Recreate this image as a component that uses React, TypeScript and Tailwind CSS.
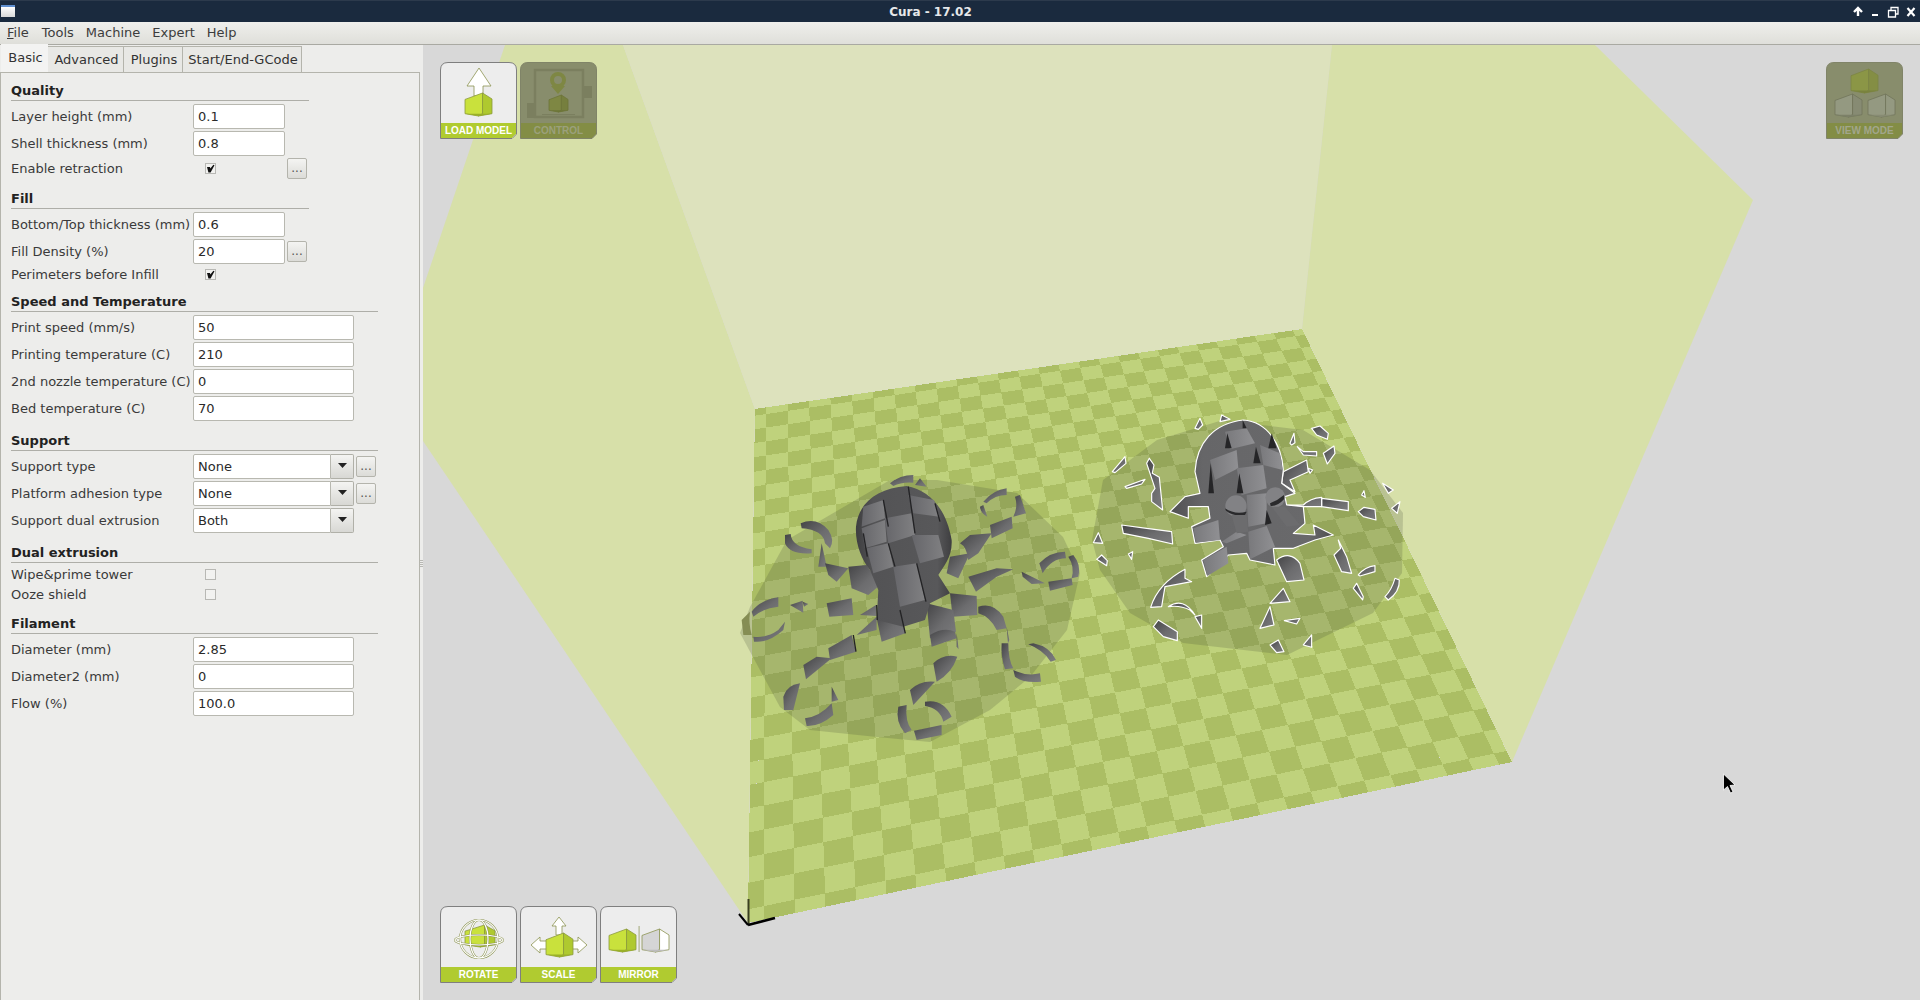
import React from "react";

const FONT = "font-['DejaVu_Sans',sans-serif]";

// Bed corners on the page: back left, back right, front right, front left
const BED = [
  [748, 923],
  [1512, 762],
  [1302, 329],
  [755, 409],
];
const CELLS_U = 27;
const CELLS_V = 27;

function makeProjector(q: number[][]) {
  const [[x0, y0], [x1, y1], [x2, y2], [x3, y3]] = q;
  const dx1 = x1 - x2;
  const dx2 = x3 - x2;
  const sx = x0 - x1 + x2 - x3;
  const dy1 = y1 - y2;
  const dy2 = y3 - y2;
  const sy = y0 - y1 + y2 - y3;
  const den = dx1 * dy2 - dx2 * dy1;
  const g = (sx * dy2 - dx2 * sy) / den;
  const h = (dx1 * sy - sx * dy1) / den;
  const a = x1 - x0 + g * x1;
  const b = x3 - x0 + h * x3;
  const d = y1 - y0 + g * y1;
  const e = y3 - y0 + h * y3;
  return (u: number, v: number) => {
    const w = g * u + h * v + 1;
    return `${((a * u + b * v + x0) / w).toFixed(1)},${((d * u + e * v + y0) / w).toFixed(1)}`;
  };
}

function bedCells() {
  const project = makeProjector(BED);
  const stops = (n: number) => {
    const list = [0];
    for (let i = 0; i < n; i++) list.push((i + 0.5) / n);
    list.push(1);
    return list;
  };
  const us = stops(CELLS_U);
  const vs = stops(CELLS_V);
  const light: string[] = [];
  const dark: string[] = [];
  for (let i = 0; i < us.length - 1; i++) {
    for (let j = 0; j < vs.length - 1; j++) {
      const pts = [
        project(us[i], vs[j]),
        project(us[i + 1], vs[j]),
        project(us[i + 1], vs[j + 1]),
        project(us[i], vs[j + 1]),
      ].join(" ");
      if ((i + j) % 2 === 0) light.push(pts);
      else dark.push(pts);
    }
  }
  return { light, dark };
}

// Left model, in a 3x space that starts at (730,460)
const LEFT_PARTS = [
  "M480,70 Q510,45 550,45 L550,68 Q515,65 490,78Z",
  "M555,75 L570,55 L590,80Z",
  "M760,125 Q790,90 830,85 L830,105 Q795,105 770,130Z",
  "M750,140 L760,135 L772,170 Q752,160 750,140Z",
  "M855,110 L870,105 L888,160 L850,170 Q865,140 855,110Z",
  "M780,195 L845,170 L848,205 L785,235Z",
  "M690,250 L720,225 L785,220 L745,280 L715,300 Q710,260 690,250Z",
  "M660,290 L720,280 L685,355 L650,340Z",
  "M715,350 L800,325 L850,328 L800,350 L738,395Z",
  "M875,335 L945,370 L905,372 L878,350Z",
  "M928,310 Q960,275 1005,275 L1008,295 Q965,295 938,340Z",
  "M1015,290 L1030,285 Q1055,315 1045,350 L1025,355 Q1035,320 1015,290Z",
  "M955,365 L1025,355 L1028,375 L960,392Z",
  "M660,400 L740,408 L742,465 L668,470Z",
  "M745,440 Q790,425 820,470 L830,505 L800,510 Q780,470 745,460Z",
  "M830,500 L838,540 L834,550Z",
  "M815,550 L835,550 Q835,600 850,625 L825,628 Q812,590 815,550Z",
  "M910,550 Q960,560 978,600 L962,605 Q940,570 895,553Z",
  "M850,630 Q890,650 930,640 L933,665 Q880,670 855,650Z",
  "M590,430 L670,450 L678,515 L600,535Z",
  "M600,525 Q640,500 675,515 L680,535 L605,560Z",
  "M680,520 L686,568 L680,560Z",
  "M610,610 Q640,580 682,590 Q665,640 620,665Z",
  "M540,690 Q570,660 615,665 L550,735Z",
  "M585,725 Q640,715 665,770 L640,785 Q630,745 585,738Z",
  "M505,740 L530,735 Q525,785 545,810 L525,820 Q495,785 505,740Z",
  "M552,812 L635,795 L635,825 L560,840Z",
  "M295,565 L365,525 L378,575 L300,600Z",
  "M220,615 L260,590 L305,595 L228,658Z",
  "M380,525 L440,470 L440,510Z",
  "M390,465 L438,435 L440,468Z",
  "M440,475 L510,450 L526,520 L455,545Z",
  "M160,710 Q170,675 210,670 L190,750 L162,750Z",
  "M305,680 L325,720 L305,725Z",
  "M225,775 Q270,770 305,730 L310,765 Q270,800 230,798Z",
  "M290,430 L365,415 L370,465 L298,470Z",
  "M180,435 L218,422 L220,458Z",
  "M218,425 L235,432 L222,440Z",
  "M65,455 Q90,420 145,412 L145,440 Q100,445 70,470Z",
  "M70,530 Q110,535 145,510 L165,485 L160,510 Q115,550 72,545Z",
  "M212,190 Q260,170 295,210 Q315,240 300,265 L285,250 Q280,210 215,205Z",
  "M165,225 L182,222 Q185,260 245,268 L245,280 Q180,285 165,250Z",
  "M275,250 L290,320 L265,320Z",
  "M285,310 L355,325 L320,365 L295,345Z",
  "M355,320 L410,315 L450,375 L415,405 L365,385Z",
];

const LEFT_BODY =
  "M378,200 C385,130 440,85 530,78 C600,90 650,150 665,240 C668,290 640,320 625,345 L660,400 L600,430 L585,480 L520,500 L440,480 L445,390 L420,330 C395,300 375,250 378,200Z";

const LEFT_LIGHT = [
  "M465,175 L545,160 L555,225 L475,250Z",
  "M395,205 L465,180 L470,245 L405,265Z",
  "M535,105 L612,120 L628,170 L550,160Z",
  "M545,225 L625,225 L642,290 L570,310Z",
  "M410,265 L475,250 L490,320 L430,340Z",
  "M490,320 L560,310 L585,420 L510,440Z",
  "M400,140 L460,120 L465,175 L395,200Z",
];

// Right model, in a 3x space that starts at (1090,400)
const RIGHT_BODY =
  "M315,215 C320,130 370,70 460,60 C530,65 575,130 580,210 L575,250 L615,280 L585,290 L590,315 L640,320 L645,370 L610,400 L675,405 L670,375 L730,405 L675,420 L610,445 L550,445 L555,495 L480,480 L470,460 L415,465 L350,530 L335,480 L400,440 L390,420 L315,430 L305,380 L360,355 L355,320 L295,320 L295,355 L240,335 L285,290 L330,280Z";

const RIGHT_LIGHT = [
  "M360,180 L440,150 L445,205 L375,240Z",
  "M440,205 L520,195 L530,265 L455,285Z",
  "M510,135 L570,160 L578,210 L520,195Z",
  "M405,95 L470,85 L495,130 L420,148Z",
  "M470,285 L530,280 L530,370 L475,380Z",
  "M475,395 L530,378 L555,440 L480,478Z",
  "M310,385 L385,360 L390,420 L318,428Z",
  "M395,425 L440,395 L470,405 L410,430Z",
  "M340,480 L410,440 L415,490 L352,528Z",
];

const RIGHT_SPIKES = [
  "M405,145 L412,100 L425,145Z",
  "M490,190 L498,140 L512,190Z",
  "M535,145 L545,100 L560,145Z",
  "M355,280 L362,190 L372,280Z",
  "M440,280 L448,220 L460,280Z",
  "M525,375 L530,330 L545,370Z",
  "M458,60 L470,85 L458,85Z",
];

const RIGHT_PARTS = [
  "M315,85 L330,55 L338,75 L325,88Z",
  "M390,65 L395,45 L420,58Z",
  "M665,85 L690,78 L715,100 L712,118 L680,105Z",
  "M600,130 L612,100 L615,128 L605,135Z",
  "M622,140 L640,155 L680,155 L680,168 L640,165Z",
  "M700,160 L732,138 L735,160 L712,192Z",
  "M580,215 L650,180 L655,215 L600,240 L615,275 L575,250Z",
  "M655,205 L668,210 L660,220Z",
  "M695,295 L775,305 L775,332 L695,320Z",
  "M585,315 L640,315 Q660,295 695,292 L695,320 L640,320Z",
  "M815,285 L822,272 L826,292Z",
  "M878,250 L910,270 L895,280Z",
  "M905,325 L930,305 L922,340Z",
  "M805,335 L822,322 L855,328 L858,360 L820,350Z",
  "M745,420 L770,470 L785,520 L755,515 L732,465 L752,445Z",
  "M805,525 Q825,500 855,497 L855,515 L810,528Z",
  "M790,565 L800,550 L820,590 L818,600Z",
  "M885,590 Q905,570 915,535 L928,540 Q930,575 895,600Z",
  "M560,480 Q600,450 630,490 L642,540 L590,545Z",
  "M540,610 L580,565 L600,605Z",
  "M510,685 L540,620 L552,675Z",
  "M583,662 L630,655 L620,672Z",
  "M540,735 L565,720 L582,755 L560,758Z",
  "M640,735 L665,705 L665,742Z",
  "M190,680 L205,660 L262,695 L262,722 L220,710Z",
  "M235,620 Q280,590 315,645 L300,630 Q270,615 235,620Z",
  "M315,650 L335,645 L335,685Z",
  "M182,622 Q205,550 285,508 L285,535 L305,545 L225,560 L215,620Z",
  "M95,375 L170,385 L245,395 L248,432 L175,415 L100,400Z",
  "M10,428 L25,398 L38,430Z",
  "M20,478 L35,465 L52,482 L50,497Z",
  "M115,462 L128,455 L125,478Z",
  "M67,215 L105,170 L108,190 L75,218Z",
  "M105,260 L165,238 L155,252 L110,265Z",
  "M170,190 L178,175 L192,195 L187,220 L208,232 L218,330 L185,305 L185,280 L195,265Z",
];

function Scene() {
  const { light, dark } = bedCells();
  return (
    <svg viewBox="423 45 1497 955" className="absolute inset-0 h-[955px] w-[1497px]">
      <defs>
        <linearGradient id="armShade" x1="0" y1="0" x2="1" y2="1">
          <stop offset="0" stopColor="#444446" />
          <stop offset="0.55" stopColor="#6c6c6e" />
          <stop offset="1" stopColor="#7c7c7e" />
        </linearGradient>
        <linearGradient id="bodyShade" x1="0" y1="0" x2="1" y2="0">
          <stop offset="0" stopColor="#3e3e40" />
          <stop offset="0.18" stopColor="#535355" />
          <stop offset="0.85" stopColor="#58585a" />
          <stop offset="1" stopColor="#3e3e40" />
        </linearGradient>
        <linearGradient id="lightShade" x1="0" y1="0" x2="1" y2="0">
          <stop offset="0" stopColor="#66666a" />
          <stop offset="1" stopColor="#808082" />
        </linearGradient>
        <linearGradient id="bodyShadeSelected" x1="0" y1="0" x2="1" y2="0">
          <stop offset="0" stopColor="#505052" />
          <stop offset="0.2" stopColor="#666668" />
          <stop offset="0.85" stopColor="#69696b" />
          <stop offset="1" stopColor="#4e4e50" />
        </linearGradient>
        <linearGradient id="lightShadeSelected" x1="0" y1="0" x2="1" y2="0">
          <stop offset="0" stopColor="#79797c" />
          <stop offset="1" stopColor="#909093" />
        </linearGradient>
      </defs>

      {/* Build volume walls */}
      <polygon points="505,45 623,45 755,409 748,923 423,441 423,288" fill="#d7e0a9" />
      <polygon points="623,45 1332,45 1302,329 755,409" fill="#dde2bd" />
      <polygon points="1332,45 1595,45 1753,200 1512,762 1302,329" fill="#d7e0a9" />

      {/* Bed */}
      <g shapeRendering="crispEdges">
        {light.map((p) => (
          <polygon key={p} points={p} fill="#bfd27c" />
        ))}
        {dark.map((p) => (
          <polygon key={p} points={p} fill="#abbe64" />
        ))}
      </g>

      {/* Convex hull shadows */}
      <polygon
        points="740,633 750,607 787,540 890,480 937,480 1017,493 1063,537 1080,573 1067,630 1030,677 990,710 930,742 877,737 810,730 780,707"
        fill="#3a3e30"
        opacity="0.19"
      />
      <polygon
        points="1092,540 1103,480 1157,440 1223,420 1303,430 1370,470 1403,513 1402,573 1373,613 1287,655 1183,643 1130,613 1100,570"
        fill="#3a3e30"
        opacity="0.19"
      />

      {/* Left model */}
      <g transform="translate(730 460) scale(0.3333)">
        <path d="M35,480 L60,455 Q55,490 65,525 L40,525Z" fill="#858d54" />
        {LEFT_PARTS.map((d) => (
          <path key={d} d={d} fill="url(#armShade)" />
        ))}
        <path d={LEFT_BODY} fill="url(#bodyShade)" />
        {LEFT_LIGHT.map((d) => (
          <path key={d} d={d} fill="url(#lightShade)" />
        ))}
        <path
          d="M460,120 L475,200 M535,80 L555,220 M615,130 L630,185 M400,220 L412,290 M475,250 L495,320 M560,310 L588,425 M440,435 L442,480 M370,525 L378,575 M510,450 L526,520"
          stroke="#232325"
          strokeWidth="4"
          fill="none"
        />
      </g>

      {/* Right model, outlined because it is selected */}
      <g transform="translate(1090 400) scale(0.3333)" stroke="#ffffff" strokeWidth="3.5" strokeLinejoin="round">
        {RIGHT_PARTS.map((d) => (
          <path key={d} d={d} fill="url(#armShade)" />
        ))}
        <path d={RIGHT_BODY} fill="url(#bodyShadeSelected)" />
        <g stroke="none">
          {RIGHT_LIGHT.map((d) => (
            <path key={d} d={d} fill="url(#lightShadeSelected)" />
          ))}
          {RIGHT_SPIKES.map((d) => (
            <path key={d} d={d} fill="#252527" />
          ))}
          <circle cx="438" cy="318" r="32" fill="#828285" />
          <circle cx="556" cy="292" r="30" fill="#828285" />
          <path d="M405,325 Q435,345 470,335 L465,345 Q430,350 408,332Z" fill="#2a2a2c" />
          <path d="M540,310 Q565,300 582,285 L582,298 Q562,320 542,318Z" fill="#2a2a2c" />
          <path d="M425,345 L470,345 L475,395 L440,400Z" fill="#6c6c6e" />
          <path d="M545,320 L585,320 L630,375 L590,380Z" fill="#6c6c6e" />
        </g>
      </g>

      {/* Axis marker */}
      <g stroke="#000000" fill="none">
        <path d="M748.5,899 L748.5,925" strokeWidth="2" stroke="#3a4020" />
        <path d="M748,925 L775,918" strokeWidth="2.5" />
        <path d="M739,914 L748,925" strokeWidth="2" />
      </g>

      {/* Mouse pointer */}
      <path
        d="M1723.5,774 L1723.5,790 L1727.5,786.5 L1730.5,793 L1733,792 L1730,785.5 L1735,785 Z"
        fill="#000000"
        stroke="#ffffff"
        strokeWidth="0.8"
      />
    </svg>
  );
}

interface CubeProps {
  x: number;
  y: number;
  w: number;
  h: number;
  left?: string;
  right?: string;
  base?: string;
  line?: string;
}

function Cube({ x, y, w, h, left = "#c9e13c", right = "#afc92f", base = "#9ab028", line = "#8b993c" }: CubeProps) {
  const px = (f: number) => x + w * f;
  const py = (f: number) => y + h * f;
  return (
    <g stroke={line} strokeWidth="0.8" strokeLinejoin="round">
      <polygon
        points={`${px(0)},${py(0.28)} ${px(0.65)},${py(0)} ${px(0.65)},${py(0.9)} ${px(0.5)},${py(1)} ${px(0)},${py(0.9)}`}
        fill={left}
      />
      <polygon
        points={`${px(0.65)},${py(0)} ${px(1)},${py(0.26)} ${px(1)},${py(0.9)} ${px(0.5)},${py(1)} ${px(0.65)},${py(0.9)}`}
        fill={right}
      />
      <polygon points={`${px(0)},${py(0.9)} ${px(1)},${py(0.9)} ${px(0.5)},${py(1)}`} fill={base} stroke="none" />
    </g>
  );
}

function Arrow({ points }: { points: string }) {
  return <polygon points={points} fill="#ffffff" stroke="#8b9350" strokeWidth="0.8" />;
}

function LoadIcon() {
  return (
    <>
      <Arrow points="39,6 51,24 43,24 43,34 34,34 34,24 27,24" />
      <Cube x={25} y={31} w={27} h={23} />
    </>
  );
}

function ControlIcon() {
  return (
    <>
      <rect x="7" y="41" width="8" height="15" fill="#7b7f5f" />
      <rect x="64" y="24" width="8" height="12" fill="#7b7f5f" />
      <rect x="15" y="8" width="48" height="47" fill="none" stroke="#7b7f5f" strokeWidth="2.5" />
      <circle cx="38" cy="18" r="6" fill="none" stroke="#7e8743" strokeWidth="4" />
      <polygon points="31,24 45,24 38,32" fill="#7e8743" />
      <Cube x={29} y={33} w={19} h={17} left="#7e8743" right="#767f3e" base="#6d7538" line="#6d7538" />
      <rect x="22" y="52" width="33" height="1" fill="#7b7f5f" />
    </>
  );
}

function ViewIcon() {
  return (
    <>
      <Cube x={25} y={7} w={27} h={24} left="#8b9646" right="#848e44" base="#79823e" line="#7c8544" />
      <Cube x={9} y={32} w={27} h={23} left="#949981" right="#878b73" base="#7c8068" line="#71755a" />
      <Cube x={42} y={32} w={27} h={23} left="#949981" right="#949981" base="#878b73" line="#71755a" />
    </>
  );
}

function RotateIcon() {
  return (
    <>
      <Cube x={25} y={19} w={30} h={22} />
      <g fill="none" stroke="#8b9350" strokeWidth="2.2">
        <circle cx="39" cy="33" r="19" />
        <ellipse cx="39" cy="33" rx="9" ry="19" />
        <ellipse cx="39" cy="34" rx="24" ry="5" />
      </g>
      <g fill="none" stroke="#ffffff" strokeWidth="1.2">
        <circle cx="39" cy="33" r="19" />
        <ellipse cx="39" cy="33" rx="9" ry="19" />
        <ellipse cx="39" cy="34" rx="24" ry="5" />
      </g>
    </>
  );
}

function ScaleIcon() {
  return (
    <>
      <Arrow points="39,11 46,20 42,20 42,29 36,29 36,20 32,20" />
      <Arrow points="11,39 20,31 20,35 28,35 28,43 20,43 20,47" />
      <Arrow points="67,39 58,31 58,35 50,35 50,43 58,43 58,47" />
      <Cube x={26} y={27} w={27} h={24} />
    </>
  );
}

function MirrorIcon() {
  return (
    <>
      <Cube x={9} y={23} w={27} h={23} />
      <rect x="38.5" y="20" width="1.2" height="26" fill="#aeb48c" />
      <Cube x={42} y={23} w={27} h={23} left="#d5d5d5" right="#ffffff" base="#bcbcbc" line="#8b9350" />
    </>
  );
}

interface ToolButtonProps {
  label: string;
  dim?: boolean;
  children: React.ReactNode;
  labelClass?: string;
}

function ToolButton({ label, dim, children, labelClass }: ToolButtonProps) {
  const body = dim ? "#888d6c" : "#ededed";
  const strip = dim ? "#838d45" : "#b0cb30";
  const edge = dim ? "#808468" : "#7f7f7f";
  return (
    <div className="relative h-[77px] w-[77px]">
      <svg viewBox="0 0 77 77" className="absolute inset-0 h-[77px] w-[77px]">
        <path d="M0.5,76.5 L0.5,8 Q0.5,0.5 8,0.5 L69,0.5 Q76.5,0.5 76.5,8 L76.5,72 L72,76.5 Z" fill={body} stroke={edge} />
        <path d="M1,61 L76,61 L76,71.8 L71.8,76 L1,76 Z" fill={strip} />
        {children}
      </svg>
      <span
        className={`absolute bottom-0 left-0 flex h-[16px] w-[77px] items-center justify-center font-['Liberation_Sans',sans-serif] text-[10px] leading-none font-bold ${labelClass ?? "text-white"}`}
      >
        {label}
      </span>
    </div>
  );
}

function TitleBar() {
  return (
    <div className="relative flex h-[22px] shrink-0 items-center justify-center border-t border-[#2c3a4c] bg-[#1a2a3e] pr-[59px]">
      <div className="absolute top-[4px] left-[1px] h-[12px] w-[14px] border-t-2 border-[#5f8fd0] bg-gradient-to-b from-white to-[#d8d8d8]" />
      <span className={`text-[12px] leading-none font-bold text-[#e6e8ea] ${FONT}`}>Cura - 17.02</span>
      <svg viewBox="0 0 70 22" className="absolute top-[-1px] right-0 h-[22px] w-[70px]">
        <path d="M4,12 L8,8 L12,12 M8,9 L8,16" stroke="#ffffff" strokeWidth="2.4" fill="none" />
        <rect x="22" y="14" width="6" height="2" fill="#ffffff" />
        <path d="M38.5,10.5 h7 v6.5 h-7 Z M41,10 V7.5 h7 v6.5 h-2" stroke="#ffffff" strokeWidth="1.3" fill="none" />
        <path d="M57.5,8 L64.5,16 M64.5,8 L57.5,16" stroke="#ffffff" strokeWidth="2.2" fill="none" />
      </svg>
    </div>
  );
}

function MenuBar() {
  return (
    <div
      className={`flex h-[23px] shrink-0 items-center gap-[12px] border-b border-[#a9a9a2] bg-gradient-to-b from-[#efefec] to-[#dfdfda] pl-[7px] text-[13px] text-[#3c3c3c] ${FONT}`}
    >
      <span className="mr-[1px]">
        <span className="underline">F</span>ile
      </span>
      <span>Tools</span>
      <span>Machine</span>
      <span>Expert</span>
      <span>Help</span>
    </div>
  );
}

function Tabs() {
  const tabClass =
    "flex h-[26px] items-center justify-center border-t border-r border-[#b4b4ac] bg-[#e8e8e5] pl-[2px] text-[#333333]";
  return (
    <div className={`flex h-[27px] items-end pl-[1px] text-[13px] ${FONT}`}>
      <div className="relative z-10 flex h-[28px] w-[47px] items-center justify-center bg-[#f3f3f2] pb-[1px] pl-[2px] text-[#333333]">
        Basic
      </div>
      <div className={`${tabClass} w-[76px]`}>Advanced</div>
      <div className={`${tabClass} w-[59px]`}>Plugins</div>
      <div className={`${tabClass} w-[119px]`}>Start/End-GCode</div>
    </div>
  );
}

function Section({ title, wide, children }: { title: string; wide?: boolean; children: React.ReactNode }) {
  return (
    <section className="mb-[1px] flex flex-col">
      <div
        className={`ml-[10px] flex h-[29px] items-end border-b border-[#aeaea8] pb-[1px] text-[13px] leading-[17px] font-bold text-[#222222] ${
          wide ? "w-[367px]" : "w-[298px]"
        }`}
      >
        {title}
      </div>
      <div className="flex flex-col gap-[2px] pt-[3px] pl-[10px]">{children}</div>
    </section>
  );
}

function Label({ children }: { children: React.ReactNode }) {
  return <span className="w-[182px] shrink-0 text-[13px] leading-none whitespace-nowrap text-[#3a3a3a]">{children}</span>;
}

function MoreButton() {
  return (
    <div className="flex h-[21px] w-[20px] shrink-0 items-center justify-center rounded-[2px] border border-[#b4b4ac] bg-gradient-to-b from-[#f4f4f2] to-[#dcdcd8] pb-[1px] text-[12px] leading-none text-[#555555]">
      ...
    </div>
  );
}

function Field({ label, value, wide, more }: { label: string; value: string; wide?: boolean; more?: boolean }) {
  return (
    <div className="flex h-[25px] items-center">
      <Label>{label}</Label>
      <input
        readOnly
        value={value}
        className={`h-[25px] rounded-[2px] border border-[#b8b8b0] bg-white pl-[4px] text-[13px] text-[#2a2a2a] outline-none ${
          wide ? "w-[161px]" : "w-[92px]"
        }`}
      />
      {more && (
        <div className="ml-[2px]">
          <MoreButton />
        </div>
      )}
    </div>
  );
}

function Combo({ label, value, more }: { label: string; value: string; more?: boolean }) {
  return (
    <div className="flex h-[25px] items-center">
      <Label>{label}</Label>
      <div className="flex h-[25px] w-[138px] items-center rounded-l-[2px] border border-[#b8b8b0] bg-white pl-[4px] text-[13px] text-[#2a2a2a]">
        {value}
      </div>
      <div className="flex h-[25px] w-[23px] items-center justify-center rounded-r-[2px] border border-l-0 border-[#b0b0a8] bg-gradient-to-b from-[#f4f4f2] to-[#d8d8d4] pb-[3px]">
        <svg viewBox="0 0 9 5" className="h-[5px] w-[9px]">
          <polygon points="0,0 9,0 4.5,5" fill="#222222" />
        </svg>
      </div>
      {more && (
        <div className="ml-[2px]">
          <MoreButton />
        </div>
      )}
    </div>
  );
}

function Check({ checked }: { checked?: boolean }) {
  return (
    <div className="ml-[12px] flex h-[11px] w-[11px] shrink-0 items-center justify-center border border-[#b8b8b4] bg-[#f2f2f0]">
      {checked && (
        <svg viewBox="0 0 9 9" className="h-[9px] w-[9px]">
          <path d="M1,3 L4,3 L4.3,4.6 L7.4,0.8 L8.5,1.2 L4.6,8.6 L2.4,8.6 Z" fill="#111111" />
        </svg>
      )}
    </div>
  );
}

function CheckRow({ label, checked, height, more }: { label: string; checked?: boolean; height: string; more?: boolean }) {
  return (
    <div className={`flex items-center pb-[1px] ${height}`}>
      <Label>{label}</Label>
      <Check checked={checked} />
      {more && (
        <div className="ml-[71px]">
          <MoreButton />
        </div>
      )}
    </div>
  );
}

function SettingsPanel() {
  return (
    <aside className={`flex w-[423px] shrink-0 bg-[#ededeb] ${FONT}`}>
      <div className="flex w-[420px] shrink-0 flex-col">
        <Tabs />
        <div className="flex-1 border-t border-r border-l border-[#b4b4ac] bg-[#ededeb]">
          <div className="-mt-[1px]">
            <Section title="Quality">
              <Field label="Layer height (mm)" value="0.1" />
              <Field label="Shell thickness (mm)" value="0.8" />
              <CheckRow label="Enable retraction" checked height="h-[21px]" more />
            </Section>
            <Section title="Fill">
              <Field label="Bottom/Top thickness (mm)" value="0.6" />
              <Field label="Fill Density (%)" value="20" more />
              <CheckRow label="Perimeters before Infill" checked height="h-[17px] -mb-[1px]" />
            </Section>
            <Section title="Speed and Temperature" wide>
              <Field label="Print speed (mm/s)" value="50" wide />
              <Field label="Printing temperature (C)" value="210" wide />
              <Field label="2nd nozzle temperature (C)" value="0" wide />
              <Field label="Bed temperature (C)" value="70" wide />
            </Section>
            <Section title="Support" wide>
              <Combo label="Support type" value="None" more />
              <Combo label="Platform adhesion type" value="None" more />
              <Combo label="Support dual extrusion" value="Both" />
            </Section>
            <Section title="Dual extrusion" wide>
              <CheckRow label="Wipe&prime tower" height="h-[18px]" />
              <CheckRow label="Ooze shield" height="h-[18px]" />
            </Section>
            <Section title="Filament" wide>
              <Field label="Diameter (mm)" value="2.85" wide />
              <Field label="Diameter2 (mm)" value="0" wide />
              <Field label="Flow (%)" value="100.0" wide />
            </Section>
          </div>
        </div>
      </div>
      {/* Sash with its grip */}
      <div className="flex w-[3px] flex-col justify-center gap-[1px] pt-[82px]">
        <div className="h-[1px] w-[3px] bg-[#b8b8b4]" />
        <div className="h-[1px] w-[3px] bg-[#b8b8b4]" />
        <div className="h-[1px] w-[3px] bg-[#b8b8b4]" />
        <div className="h-[1px] w-[3px] bg-[#b8b8b4]" />
      </div>
    </aside>
  );
}

export default function App() {
  return (
    <div className="flex h-[1000px] w-[1920px] flex-col overflow-hidden bg-[#d8d8d8]">
      <TitleBar />
      <MenuBar />
      <div className="flex min-h-0 flex-1">
        <SettingsPanel />
        <main className="relative flex-1 bg-[#d8d8d8]">
          <Scene />
          <div className="absolute top-[17px] left-[17px] flex gap-[3px]">
            <ToolButton label="LOAD MODEL">
              <LoadIcon />
            </ToolButton>
            <ToolButton label="CONTROL" dim labelClass="text-[#9ba07c]">
              <ControlIcon />
            </ToolButton>
          </div>
          <div className="absolute top-[17px] right-[17px]">
            <ToolButton label="VIEW MODE" dim labelClass="text-[#a2a68c]">
              <ViewIcon />
            </ToolButton>
          </div>
          <div className="absolute bottom-[17px] left-[17px] flex gap-[3px]">
            <ToolButton label="ROTATE">
              <RotateIcon />
            </ToolButton>
            <ToolButton label="SCALE">
              <ScaleIcon />
            </ToolButton>
            <ToolButton label="MIRROR">
              <MirrorIcon />
            </ToolButton>
          </div>
        </main>
      </div>
    </div>
  );
}
